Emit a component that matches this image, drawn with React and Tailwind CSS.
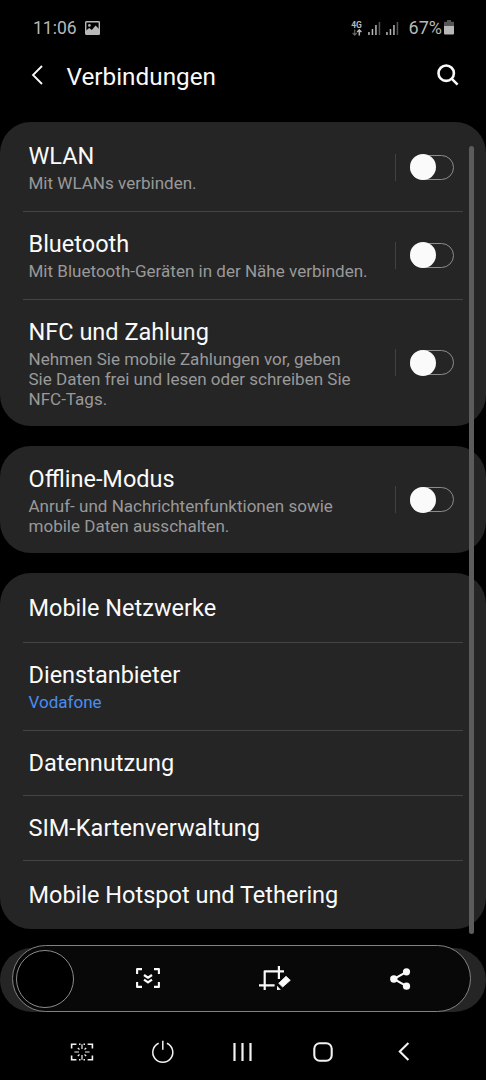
import { useState } from 'react';

const connectionItems = [
  { id: 'wlan', title: 'WLAN', lines: ['Mit WLANs verbinden.'], height: 'h-[89px] pt-5' },
  { id: 'bluetooth', title: 'Bluetooth', lines: ['Mit Bluetooth-Geräten in der Nähe verbinden.'], height: 'h-[88px] pt-[19px]' },
  {
    id: 'nfc',
    title: 'NFC und Zahlung',
    lines: ['Nehmen Sie mobile Zahlungen vor, geben', 'Sie Daten frei und lesen oder schreiben Sie', 'NFC-Tags.'],
    height: 'h-[127px] pt-[19px]'
  }
];

const offlineItems = [
  {
    id: 'offline',
    title: 'Offline-Modus',
    lines: ['Anruf- und Nachrichtenfunktionen sowie', 'mobile Daten ausschalten.'],
    height: 'h-[107px] pt-[19px]'
  }
];

const networkItems = [
  { title: 'Mobile Netzwerke', height: 'h-[69px] pt-[21px]' },
  { title: 'Dienstanbieter', value: 'Vodafone', height: 'h-[88px] pt-[19px]' },
  { title: 'Datennutzung', height: 'h-[65px] pt-[19px]' },
  { title: 'SIM-Kartenverwaltung', height: 'h-[65px] pt-[19px]' },
  { title: 'Mobile Hotspot und Tethering', height: 'h-[69px] pt-[21px]' }
];

function Card({ children }) {
  return <section className="rounded-[31px] bg-[#252525]">{children}</section>;
}

function Divider() {
  return <div className="mx-[23px] -mb-px h-px bg-[#444444]" />;
}

function Toggle({ label, on, onChange }) {
  return (
    <button
      role="switch"
      aria-checked={on}
      aria-label={label}
      onClick={onChange}
      className="flex h-[26px] w-11 items-center"
    >
      <span className="flex h-[25px] w-11 items-center rounded-full border border-[#8c8c8c]">
        <span className={`-ml-px size-[26px] shrink-0 rounded-full bg-[#fafafa] ${on ? 'translate-x-[18px]' : ''}`} />
      </span>
    </button>
  );
}

function SwitchRow({ item, on, onChange }) {
  return (
    <div className={`flex justify-between pr-8 pl-[28.5px] ${item.height}`}>
      <div className="whitespace-nowrap">
        <h2 className="text-[23.5px] leading-7 text-[#fafafa]">{item.title}</h2>
        <p className="mt-[3px] text-[17.05px] leading-5 text-[#999999]">
          {item.lines.map((line) => (
            <span key={line} className="block">{line}</span>
          ))}
        </p>
      </div>
      <div className="-mt-[19px] flex items-center gap-[14px]">
        <span className="h-[27px] w-px bg-[#414141]" />
        <Toggle label={item.title} on={on} onChange={onChange} />
      </div>
    </div>
  );
}

function StatusBar() {
  return (
    <div className="flex h-14 items-start justify-between pt-[17px] pr-8 pl-[33px] text-[#b8b8b8]">
      <div className="flex items-center gap-2">
        <span className="text-[17.5px] leading-[22px]">11:06</span>
        <svg width="15" height="14" viewBox="0 0 15 14" className="-mt-px">
          <rect x="0.7" y="0.7" width="13.6" height="12.6" rx="0.6" fill="none" stroke="currentColor" strokeWidth="1.4" />
          <circle cx="4.4" cy="4.4" r="1.3" fill="currentColor" />
          <path d="M1 9.5 4.3 7l2.5 2 3.8-4.5L14 8v5.5H1z" fill="currentColor" />
        </svg>
      </div>
      <div className="flex items-center">
        <div className="flex w-3 flex-col items-center">
          <span className="text-[8.5px] leading-[8px] font-bold">4G</span>
          <svg width="10" height="7" viewBox="0 0 10 7" fill="none" strokeWidth="1.2">
            <path d="M2.7 .5v5.3M.6 3.9l2.1 2.2 2.1-2.2" stroke="#686868" />
            <path d="M7.3 6.5V1.2M5.2 3.1l2.1-2.2 2.1 2.2" stroke="currentColor" strokeWidth="1.5" />
          </svg>
        </div>
        <Signal className="ml-[5px]" />
        <Signal className="ml-[5px]" />
        <span className="ml-[10px] text-[18px] leading-[22px]">67%</span>
        <svg width="10" height="15" viewBox="0 0 10 15" className="-mt-px ml-[2px]">
          <path d="M3 0h4v1.7h3V6H0V1.7h3z" fill="#555555" />
          <path d="M0 6h10v7.5q0 1-1 1H1q-1 0-1-1z" fill="currentColor" />
        </svg>
      </div>
    </div>
  );
}

function Signal({ className }) {
  return (
    <svg width="13" height="14" viewBox="0 0 13 14" className={`-mt-px ${className}`}>
      <path d="M.2 11h1.5v3H.2zM3.7 8h1.5v6H3.7zM7.2 4h1.5v10H7.2z" fill="currentColor" />
      <path d="M10.7 1h1.5v13h-1.5z" fill="#555555" />
    </svg>
  );
}

function CaptureToolbar() {
  return (
    <div className="absolute top-[945px] left-[11.5px] flex h-[67px] w-[459px] items-center rounded-full border border-[#828282] bg-[#080808] text-[#fafafa]">
      <div className="ml-[3px] size-[58px] rounded-full border border-[#8c8c8c] bg-black" />
      <button aria-label="Scrollen" className="ml-[62px]">
        <svg width="24" height="20" viewBox="0 0 24 20" fill="none" stroke="currentColor" strokeWidth="2.1" strokeLinejoin="round" className="-mt-px">
          <path d="M1.1 6V1.1H6M18 1.1h4.9V6M22.9 14v4.9H18M6 18.9H1.1V14" />
          <path d="m8 7 4 2.7L16 7M8 11.6l4 2.8 4-2.8" strokeWidth="2.3" />
        </svg>
      </button>
      <button aria-label="Zuschneiden" className="ml-[99px]">
        <svg width="32" height="25" viewBox="0 0 32 25" fill="none" stroke="currentColor" strokeWidth="2.2" strokeLinejoin="round" className="-mt-px">
          <path d="M0 19.3h15.6M5.7 24V5.3H25M19.9 0v13" />
          <path d="m27 10.3 4.3 4-7.6 6.7-4-3.7z" fill="currentColor" strokeWidth="0.8" />
          <path d="m18 19.7 3.9 4L18 24z" fill="currentColor" stroke="none" />
        </svg>
      </button>
      <button aria-label="Teilen" className="ml-[99px]">
        <svg width="21" height="22" viewBox="0 0 21 22" fill="currentColor">
          <path d="M16.5 3.8 3.8 11l12.7 7.2" fill="none" stroke="currentColor" strokeWidth="2.1" />
          <circle cx="3.8" cy="11" r="3.7" />
          <circle cx="16.5" cy="3.8" r="3.6" />
          <circle cx="16.5" cy="18.2" r="3.6" />
        </svg>
      </button>
    </div>
  );
}

function NavBar() {
  return (
    <nav className="flex h-[58px] items-center pl-[70px] text-[#f2f2f2]">
      <svg width="24" height="18" viewBox="0 0 24 18" fill="none" stroke="currentColor" strokeWidth="1.6" className="mt-px">
        <path d="M1.6 5.4V1.3h4.8M9 1.3h1.5M13.5 1.3H15M17.6 1.3h4.8v4.1M22.4 12.6v4.1h-4.8M15 16.7h-1.5M10.5 16.7H9M6.4 16.7H1.6v-4.1" />
        <path d="M12 1.3V6M12 12v4.7M4.4 9H9M15 9h4.6M7.8 5l1.7 1.5M16.2 5l-1.7 1.5M7.8 13l1.7-1.5M16.2 13l-1.7-1.5" strokeWidth="1.2" />
      </svg>
      <svg width="24" height="24" viewBox="0 0 24 24" fill="none" stroke="currentColor" strokeWidth="1.5" className="mt-px ml-[57px]">
        <path d="M11.8 .8v9M7.7 3.2a10 10 0 1 0 8.2 0" />
      </svg>
      <svg width="19" height="18" viewBox="0 0 19 18" fill="none" stroke="currentColor" strokeWidth="2.2" className="mt-px ml-[58px]">
        <path d="M1.5 0v18M9.5 0v18M17.5 0v18" />
      </svg>
      <svg width="20" height="20" viewBox="0 0 20 20" fill="none" stroke="currentColor" strokeWidth="2.1" className="mt-px ml-[61px]">
        <rect x="1.3" y="1.3" width="17.4" height="17.4" rx="5.4" />
      </svg>
      <svg width="12" height="19" viewBox="0 0 12 19" fill="none" stroke="currentColor" strokeWidth="2.1" className="mt-px ml-[65px]">
        <path d="M10.4 1 1.8 9.5l8.6 8.5" />
      </svg>
    </nav>
  );
}

export default function App() {
  const [switches, setSwitches] = useState({});

  const toggle = (id) => setSwitches((prev) => ({ ...prev, [id]: !prev[id] }));

  const renderSwitches = (items) =>
    items.map((item, i) => (
      <div key={item.id}>
        {i > 0 && <Divider />}
        <SwitchRow item={item} on={!!switches[item.id]} onChange={() => toggle(item.id)} />
      </div>
    ));

  return (
    <div className="relative flex h-[1080px] w-[486px] flex-col overflow-hidden bg-black font-[Roboto,sans-serif]">
      <StatusBar />

      <header className="flex h-[66px] items-start pr-[27px] pl-[31px] text-[#fafafa]">
        <svg width="12" height="20" viewBox="0 0 12 20" fill="none" stroke="currentColor" strokeWidth="1.8" className="mt-[9px]">
          <path d="M11 1 2 10l9 9" />
        </svg>
        <h1 className="mt-[5px] ml-[23.5px] text-[24.3px] leading-[31px]">Verbindungen</h1>
        <svg width="22" height="22" viewBox="0 0 22 22" fill="none" stroke="currentColor" strokeWidth="2.6" className="mt-2 ml-auto">
          <circle cx="9.2" cy="9.2" r="7.7" />
          <path d="m14.6 14.6 6 6" />
        </svg>
      </header>

      <main className="flex h-[900px] flex-col gap-5">
        <Card>{renderSwitches(connectionItems)}</Card>
        <Card>{renderSwitches(offlineItems)}</Card>
        <Card>
          {networkItems.map((item, i) => (
            <div key={item.title}>
              {i > 0 && <Divider />}
              <div className={`pl-[28.5px] ${item.height}`}>
                <h2 className="text-[23.5px] leading-7 text-[#fafafa]">{item.title}</h2>
                {item.value && <p className="mt-[3px] text-[17.05px] leading-5 text-[#4a8df0]">{item.value}</p>}
              </div>
            </div>
          ))}
        </Card>
        {/* Nächste Karte, liegt hinter der Werkzeugleiste */}
        <div className="-mt-px h-16 shrink-0 rounded-full bg-[#252525]" />
      </main>

      <NavBar />

      {/* Scrollbalken */}
      <div className="absolute top-[146px] left-[469px] h-[788px] w-[5px] rounded-full bg-[#5c5c5c]" />
      <CaptureToolbar />
    </div>
  );
}
